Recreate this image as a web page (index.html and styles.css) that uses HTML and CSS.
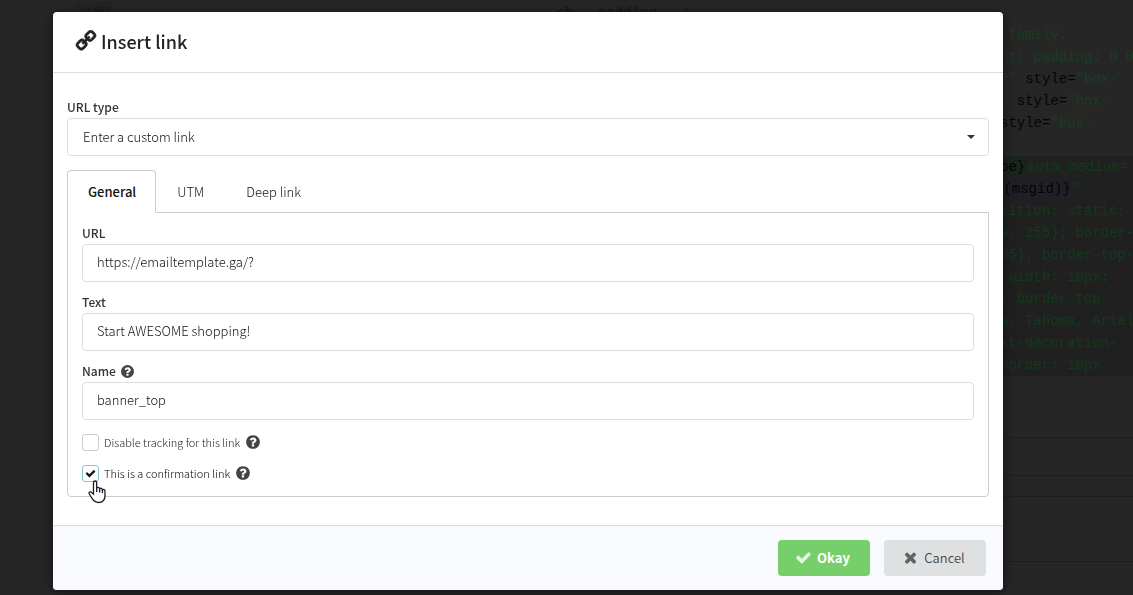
FILE: index.html
```
<!DOCTYPE html>
<html lang="en">
<head>
    <meta charset="UTF-8">
    <meta name="viewport" content="width=device-width, initial-scale=1.0">
    <title>Insert link</title>
    <link rel="stylesheet" href="styles.css">
</head>
<body>
    <!-- Icons -->
    <svg class="sprite" width="0" height="0" aria-hidden="true">
        <symbol id="icon-link" viewBox="0 0 1792 1792"><path transform="translate(1792 0) scale(-1 1)" d="M1520 1216q0-40-28-68l-208-208q-28-28-68-28-42 0-72 32 3 3 19 18.500t21.500 21.500 15 19 13 25.500 3.500 27.500q0 40-28 68t-68 28q-15 0-27.500-3.500t-25.500-13-19-15-21.500-21.500-18.500-19q-33 31-33 73 0 40 28 68l206 207q27 27 68 27 40 0 68-26l147-146q28-28 28-67zm-703-705q0-40-28-68l-206-207q-28-28-68-28-39 0-68 27l-147 146q-28 28-28 67 0 40 28 68l208 208q27 27 68 27 42 0 72-31-3-3-19-18.500t-21.500-21.500-15-19-13-25.500-3.500-27.500q0-40 28-68t68-28q15 0 27.500 3.500t25.500 13 19 15 21.500 21.500 18.500 19q33-31 33-73zm895 705q0 120-85 203l-147 146q-83 83-203 83-121 0-204-85l-206-207q-83-83-83-203 0-123 88-209l-88-88q-86 88-208 88-120 0-204-84l-208-208q-84-84-84-204t85-203l147-146q83-83 203-83 121 0 204 85l206 207q83 83 83 203 0 123-88 209l88 88q86-88 208-88 120 0 204 84l208 208q84 84 84 204z"/></symbol>
        <symbol id="icon-help" viewBox="0 0 1792 1792"><path d="M1024 1376v-192q0-14-9-23t-23-9h-192q-14 0-23 9t-9 23v192q0 14 9 23t23 9h192q14 0 23-9t9-23zm256-672q0-88-55.500-163t-138.500-116-170-41q-243 0-371 213-15 24 8 42l132 100q7 6 19 6 16 0 25-12 53-68 86-92 34-24 86-24 48 0 85.500 26t37.500 59q0 38-20 61t-68 45q-63 28-115.500 86.500t-52.500 125.500v36q0 14 9 23t23 9h192q14 0 23-9t9-23q0-19 21.500-49.500t54.500-49.500q32-18 49-28.500t46-35 44.500-48 28-60.500 12.500-81zm384 192q0 209-103 385.500t-279.500 279.500-385.500 103-385.500-103-279.500-279.500-103-385.500 103-385.500 279.500-279.500 385.500-103 385.500 103 279.500 279.500 103 385.500z"/></symbol>
        <symbol id="icon-check" viewBox="0 0 1792 1792"><path d="M1671 566q0 40-28 68l-724 724-136 136q-28 28-68 28t-68-28l-136-136-362-362q-28-28-28-68t28-68l136-136q28-28 68-28t68 28l294 295 656-657q28-28 68-28t68 28l136 136q28 28 28 68z"/></symbol>
        <symbol id="icon-times" viewBox="0 0 1792 1792"><path d="M1490 1322q0 40-28 68l-136 136q-28 28-68 28t-68-28l-294-294-294 294q-28 28-68 28t-68-28l-136-136q-28-28-28-68t28-68l294-294-294-294q-28-28-28-68t28-68l136-136q28-28 68-28t68 28l294 294 294-294q28-28 68-28t68 28l136 136q28 28 28 68t-28 68l-294 294 294 294q28 28 28 68z"/></symbol>
    </svg>

    <!-- Code editor behind the dialog -->
    <div class="editor" aria-hidden="true">
        <div class="code-row">
            <span class="gutter">189</span>
            <code class="code-top">&lt;b   padding   ;</code>
        </div>
        <div class="code">
            <div class="line"><span>-family:</span></div>
            <div class="line"><span>nt; padding: 0 0</span></div>
            <div class="line"><span>2" </span><b>style=</b><span>"box-</span></div>
            <div class="line"><span>" </span><b>style=</b><span>"box-</span></div>
            <div class="line"><b>style=</b><span>"box-</span></div>
            <div class="line"></div>
        </div>
        <div class="code selected">
            <div class="line"><span class="pill green">pe}</span><span>&amp;utm_medium=</span></div>
            <div class="line"><span class="pill violet">((msgid)}</span><span>"</span></div>
            <div class="line"><span>sition: static;</span></div>
            <div class="line"><span>9, 255); border-</span></div>
            <div class="line"><span>55); border-top-</span></div>
            <div class="line"><span>-width: 10px;</span></div>
            <div class="line"><span>; border-top-</span></div>
            <div class="line"><span>a, Tahoma, Arial</span></div>
            <div class="line"><span>xt-decoration-</span></div>
            <div class="line"><span>border: 10px</span></div>
        </div>
        <div class="strip strip-gap"></div>
        <div class="strip strip-bar"></div>
        <div class="strip strip-thin"></div>
        <div class="strip strip-panel"></div>
    </div>

    <div class="overlay">
        <form class="modal" role="dialog" aria-labelledby="title">
            <div class="modal-header">
                <svg class="icon-title"><use href="#icon-link"/></svg>
                <h1 id="title">Insert link</h1>
            </div>

            <div class="modal-body">
                <label class="label" for="type">URL type</label>
                <select id="type" class="field">
                    <option>Enter a custom link</option>
                </select>

                <div class="tabs" role="tablist">
                    <button type="button" class="tab active" role="tab" aria-selected="true">General</button>
                    <button type="button" class="tab" role="tab">UTM</button>
                    <button type="button" class="tab" role="tab">Deep link</button>
                </div>

                <div class="panel" role="tabpanel">
                    <div class="group">
                        <label class="label" for="url">URL</label>
                        <input id="url" class="field" type="text" value="https://emailtemplate.ga/?">
                    </div>
                    <div class="group">
                        <label class="label" for="text">Text</label>
                        <input id="text" class="field" type="text" value="Start AWESOME shopping!">
                    </div>
                    <div class="group">
                        <label class="label" for="name">Name <svg class="icon-help"><use href="#icon-help"/></svg></label>
                        <input id="name" class="field" type="text" value="banner_top">
                    </div>
                    <div class="check">
                        <input id="tracking" type="checkbox">
                        <label for="tracking">Disable tracking for this link</label>
                        <svg class="icon-help"><use href="#icon-help"/></svg>
                    </div>
                    <div class="check">
                        <span class="box">
                            <input id="confirm" type="checkbox" checked>
                            <svg class="tick"><use href="#icon-check"/></svg>
                            <svg class="cursor" viewBox="0 0 18 24"><path d="M5.500 14V2.800c0-2.400 3.200-2.400 3.200 0V8c.6-1 2.800-.8 2.900.8.700-.9 2.700-.6 2.800.9.900-.6 2.600-.2 2.600 1.400v4.400c0 4.300-2.600 7-6.600 7-3.300 0-4.600-1.200-6.200-3.800L1.300 14c-.9-1.700 1-2.800 2.300-1.600z"/><path d="M8.700 8v4M11.600 9v3.500M14.400 10v3"/></svg>
                        </span>
                        <label class="on" for="confirm">This is a confirmation link</label>
                        <svg class="icon-help"><use href="#icon-help"/></svg>
                    </div>
                </div>
            </div>

            <div class="modal-footer">
                <button type="button" class="btn btn-ok"><svg><use href="#icon-check"/></svg>Okay</button>
                <button type="button" class="btn btn-cancel"><svg><use href="#icon-times"/></svg>Cancel</button>
            </div>
        </form>
    </div>
</body>
</html>
```
FILE: styles.css
```
* {
    box-sizing: border-box;
}

body {
    margin: 0;
    min-height: 100vh;
    background: #262626;
    color: #333;
    font-family: "Noto Sans CJK SC", "Open Sans", sans-serif;
    font-size: 13px;
    overflow: hidden;
}

button, input, select {
    font: inherit;
    color: inherit;
}

svg {
    flex: none;
    fill: currentColor;
}

.sprite {
    position: absolute;
}

/* Editor */
.editor {
    margin-left: 55px;
    padding-top: 2px;
    color: #1a3d24;
    font: 14px/22px "Liberation Mono", monospace;
}

.code-row {
    display: flex;
    height: 22px;
    margin-left: 22px;
}

.gutter {
    width: 36px;
    padding-left: 7px;
    border-left: 1px solid #202020;
    background: #242424;
    color: #191919;
}

.code-top {
    padding-left: 443px;
    font: inherit;
    color: #151515;
    white-space: pre;
}

.code {
    padding-left: 945px;
    overflow: hidden;
}

.line {
    display: flex;
    height: 22px;
    white-space: pre;
}

.line b {
    color: #050505;
    font-weight: normal;
}

.code.selected {
    background: #202020;
    color: #123a1e;
}

.pill {
    padding-right: 2px;
    border-radius: 4px;
    color: #050505;
}

.pill.green {
    background: #1a241c;
}

.pill.violet {
    margin-left: -5px;
    background: #201f26;
}

.strip {
    border-bottom: 1px solid #1e1e1e;
}

.strip-gap {
    height: 62px;
}

.strip-bar {
    height: 38px;
}

.strip-thin {
    height: 21px;
}

.strip-panel {
    height: 65px;
}

/* Dialog */
.overlay {
    position: fixed;
    inset: 0;
    padding: 12px 130px 5px 53px;
}

.modal {
    border-radius: 4px;
    background: #fff;
    box-shadow: 0 2px 12px rgba(0, 0, 0, 0.5);
}

.modal-header {
    display: flex;
    align-items: center;
    gap: 4px;
    height: 61px;
    padding: 0 22px 2px;
    border-bottom: 1px solid #ddd;
    color: #222;
}

.modal-header h1 {
    margin: 0;
    font-size: 18px;
    font-weight: 500;
    line-height: 24px;
}

.icon-title {
    width: 22px;
    height: 22px;
    stroke: currentColor;
    stroke-width: 50;
}

.modal-body {
    padding: 23px 14px 28px;
}

.label {
    display: flex;
    align-items: center;
    gap: 4px;
    font-size: 12px;
    font-weight: 500;
    line-height: 22px;
}

.field {
    display: block;
    width: 100%;
    height: 38px;
    padding: 0 14px 3px;
    border: 1px solid #ddd;
    border-radius: 4px;
    background: #fff;
    outline: none;
    color: #111;
    font-weight: 300;
}

select.field {
    appearance: none;
    padding: 0 15px 2px;
    background: url("data:image/svg+xml,%3Csvg xmlns='http://www.w3.org/2000/svg' width='8' height='4'%3E%3Cpath d='M0 0h8L4 4z' fill='%23333'/%3E%3C/svg%3E") no-repeat right 13px center;
}

.tabs {
    display: flex;
    margin-top: 14px;
}

.tab {
    height: 43px;
    margin-bottom: -1px;
    padding: 0 20px;
    border: 1px solid transparent;
    border-radius: 4px 4px 0 0;
    background: none;
    color: #111;
    font-weight: 300;
}

.tab.active {
    padding-right: 19px;
    border-color: #ccc;
    border-bottom-color: #fff;
    background: #fff;
    font-weight: 500;
    z-index: 1;
}

.panel {
    padding: 9px 14px 12px;
    border: 1px solid #ccc;
    border-radius: 0 0 4px 4px;
}

.group {
    margin-bottom: 9px;
}

.icon-help {
    width: 15px;
    height: 15px;
    color: #444;
}

.check {
    display: flex;
    align-items: center;
    gap: 5px;
    height: 22px;
    margin-top: 9px;
    font-size: 11px;
    font-weight: 300;
    color: #222;
}

.group + .check {
    margin-top: 11px;
}

.check .on {
    color: #000;
}

.check input {
    appearance: none;
    display: block;
    width: 17px;
    height: 17px;
    margin: 0;
    border: 1px solid #ccc;
    border-radius: 3px;
    background: #fff;
}

.check input:checked {
    border-color: #85c5dc;
}

.box {
    position: relative;
}

.tick {
    position: absolute;
    top: 3px;
    left: 3px;
    width: 11px;
    height: 11px;
    color: #111;
}

.cursor {
    position: absolute;
    top: 15px;
    left: 6px;
    width: 18px;
    height: 24px;
    fill: #fff;
    stroke: #1c1c2b;
    stroke-width: 1.3;
    z-index: 1;
}

.check .icon-help {
    width: 16px;
    height: 16px;
}

.modal-footer {
    display: flex;
    justify-content: flex-end;
    gap: 14px;
    padding: 14px 17px;
    border-top: 1px solid #d8dadc;
    border-radius: 0 0 4px 4px;
    background: #f8fafd;
}

.btn {
    display: flex;
    align-items: center;
    justify-content: center;
    gap: 5px;
    height: 36px;
    padding: 0 18px 1px 15px;
    border: 0;
    border-radius: 4px;
}

.btn svg {
    width: 17px;
    height: 17px;
    opacity: 0.8;
}

.btn-ok {
    min-width: 92px;
    background: #77cf6b;
    color: #fff;
    font-weight: bold;
}

.btn-cancel {
    min-width: 102px;
    background: #dfe0e2;
    color: #444;
    font-weight: 350;
}
```
